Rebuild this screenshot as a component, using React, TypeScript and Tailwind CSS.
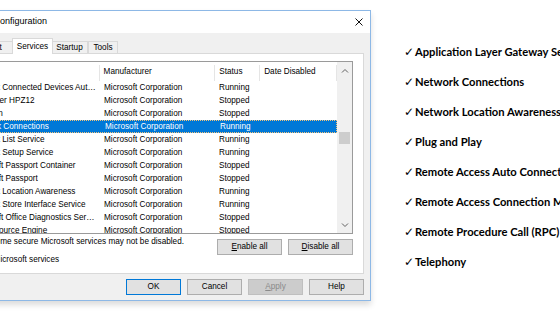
import type { ReactNode } from 'react'

const services = [
  { name: 'Network Connected Devices Auto-Setup', status: 'Running' },
  { name: 'Net Driver HPZ12', status: 'Stopped' },
  { name: 'Netlogon', status: 'Stopped' },
  { name: 'Network Connections', status: 'Running', selected: true },
  { name: 'Network List Service', status: 'Running' },
  { name: 'Network Setup Service', status: 'Running' },
  { name: 'Microsoft Passport Container', status: 'Stopped' },
  { name: 'Microsoft Passport', status: 'Stopped' },
  { name: 'Network Location Awareness', status: 'Running' },
  { name: 'Network Store Interface Service', status: 'Running' },
  { name: 'Microsoft Office Diagnostics Service', status: 'Stopped' },
  { name: 'Office Source Engine', status: 'Stopped' },
]

const notes = [
  'Application Layer Gateway Service',
  'Network Connections',
  'Network Location Awareness',
  'Plug and Play',
  'Remote Access Auto Connection Manager',
  'Remote Access Connection Manager',
  'Remote Procedure Call (RPC)',
  'Telephony',
]

function Button({
  children,
  className = '',
}: {
  children: ReactNode
  className?: string
}) {
  return (
    <div
      className={`flex h-[16px] items-center justify-center border text-[8.2px] leading-none ${className}`}
    >
      {children}
    </div>
  )
}

function Tab({
  label,
  className = '',
}: {
  label: string
  className?: string
}) {
  return (
    <div
      className={`h-[12px] border border-b-0 border-[#d9d9d9] bg-[#f0f0f0] text-center text-[8.2px] leading-[11px] ${className}`}
    >
      {label}
    </div>
  )
}

function Chevron({ up }: { up?: boolean }) {
  return (
    <svg width="8" height="5" viewBox="0 0 8 5">
      <polyline
        points={up ? '1,4.5 4,1.5 7,4.5' : '1,0.5 4,3.5 7,0.5'}
        fill="none"
        stroke="#606060"
        strokeWidth="1"
      />
    </svg>
  )
}

function ServiceList() {
  return (
    <div className="flex h-[173px] border border-[#9a9a9a] bg-white">
      <div className="w-[396px] overflow-hidden">
        <div className="flex h-[19px] pt-[3px] text-black">
          <div className="w-[159px] border-r border-[#e5e5e5]" />
          <div className="w-[116px] border-r border-[#e5e5e5] pl-[4px] leading-[13px]">
            Manufacturer
          </div>
          <div className="w-[45px] border-r border-[#e5e5e5] pl-[4px] leading-[13px]">
            Status
          </div>
          <div className="w-[77px] border-r border-[#e5e5e5] pl-[4px] leading-[13px]">
            Date Disabled
          </div>
        </div>
        {services.map((s) => (
          <div
            key={s.name}
            className={
              s.selected
                ? 'flex h-[13px] items-center border border-dotted border-[#f3c37a] bg-[#0078d7] leading-[11px] text-white'
                : 'flex h-[13px] items-center leading-[13px] text-black'
            }
          >
            <div className="flex w-[159px] items-center pl-[4px] pr-[4px]">
              <span className="mr-[16px] h-[9px] w-[9px] shrink-0 border border-[#333] bg-white" />
              <span className="min-w-0 flex-1 truncate">{s.name}</span>
            </div>
            <div className="w-[115px] pl-[4px]">Microsoft Corporation</div>
            <div className="w-[45px] pl-[4px]">{s.status}</div>
            <div className="flex-1" />
          </div>
        ))}
      </div>
      <div className="flex w-[15px] flex-col bg-[#f0f0f0]">
        <div className="flex h-[16px] items-center justify-center">
          <Chevron up />
        </div>
        <div className="flex-1">
          <div className="mx-[2px] mt-[54px] h-[12px] bg-[#cdcdcd]" />
        </div>
        <div className="flex h-[16px] items-center justify-center">
          <Chevron />
        </div>
      </div>
    </div>
  )
}

function Dialog() {
  return (
    <div className="ml-[-76px] mt-[10px] w-[447px] shrink-0 border border-[#8db8e6] bg-[#f0f0f0] font-['Liberation_Sans',Arial,sans-serif] text-[8.2px] text-black shadow-[0_4px_6px_rgba(0,0,0,0.14)]">
      <div className="flex h-[22px] items-center bg-white pl-[36px] text-[9px]">
        <span>System Configuration</span>
        <div className="ml-auto flex h-[22px] w-[23px] items-center justify-center">
          <svg width="8" height="8" viewBox="0 0 8 8">
            <path d="M0.5 0.5 L7.5 7.5 M7.5 0.5 L0.5 7.5" stroke="#111" strokeWidth="1" />
          </svg>
        </div>
      </div>
      <div className="px-[6px] pb-[5px] pt-[5px]">
        <div className="flex items-end pl-[2px]">
          <Tab label="General" className="w-[45px]" />
          <Tab label="Boot" className="w-[36px] pl-[6px] text-left" />
          <div className="relative z-10 -mx-[2px] mb-[-1px] h-[16px] w-[41px] border border-b-0 border-[#d9d9d9] bg-white text-center leading-[15px]">
            Services
          </div>
          <Tab label="Startup" className="w-[37px]" />
          <Tab label="Tools" className="w-[30px]" />
        </div>
        <div className="h-[221px] border border-[#d9d9d9] bg-white pl-[8px] pr-[10px] pt-[7px]">
          <ServiceList />
          <div className="flex justify-between">
            <div className="ml-[13px] mt-[2px] leading-[12px]">
              <div className="pl-[3px]">
                Note that some secure Microsoft services may not be disabled.
              </div>
              <div className="mt-[6px] flex items-center gap-[2px]">
                <span className="h-[9px] w-[9px] border border-[#333]" />
                <span>Hide all Microsoft services</span>
              </div>
            </div>
            <div className="mt-[5px] flex gap-[6px]">
              <Button className="w-[65px] border-[#adadad] bg-[#e1e1e1]">
                <span>
                  <u>E</u>nable all
                </span>
              </Button>
              <Button className="w-[65px] border-[#adadad] bg-[#e1e1e1]">
                <span>
                  <u>D</u>isable all
                </span>
              </Button>
            </div>
          </div>
        </div>
        <div className="mt-[5px] flex justify-end gap-[6px]">
          <Button className="w-[55px] border-[#0078d7] bg-[#e1e1e1]">OK</Button>
          <Button className="w-[55px] border-[#adadad] bg-[#e1e1e1]">Cancel</Button>
          <Button className="w-[55px] border-[#bfbfbf] bg-[#cccccc] text-[#8a8a8a]">
            <span>
              <u>A</u>pply
            </span>
          </Button>
          <Button className="w-[55px] border-[#adadad] bg-[#e1e1e1]">Help</Button>
        </div>
      </div>
    </div>
  )
}

export default function App() {
  return (
    <div className="flex h-[336px] w-[560px] items-start overflow-hidden bg-white">
      <Dialog />
      <ul className="ml-[33px] shrink-0 pt-[37px] font-['Lato',sans-serif] text-[11.2px] font-bold text-black">
        {notes.map((n) => (
          <li key={n} className="flex h-[30px] items-center whitespace-nowrap">
            <span className="w-[11px] font-['DejaVu_Sans',sans-serif] text-[12px] font-normal leading-none">
              ✓
            </span>
            {n}
          </li>
        ))}
      </ul>
    </div>
  )
}
